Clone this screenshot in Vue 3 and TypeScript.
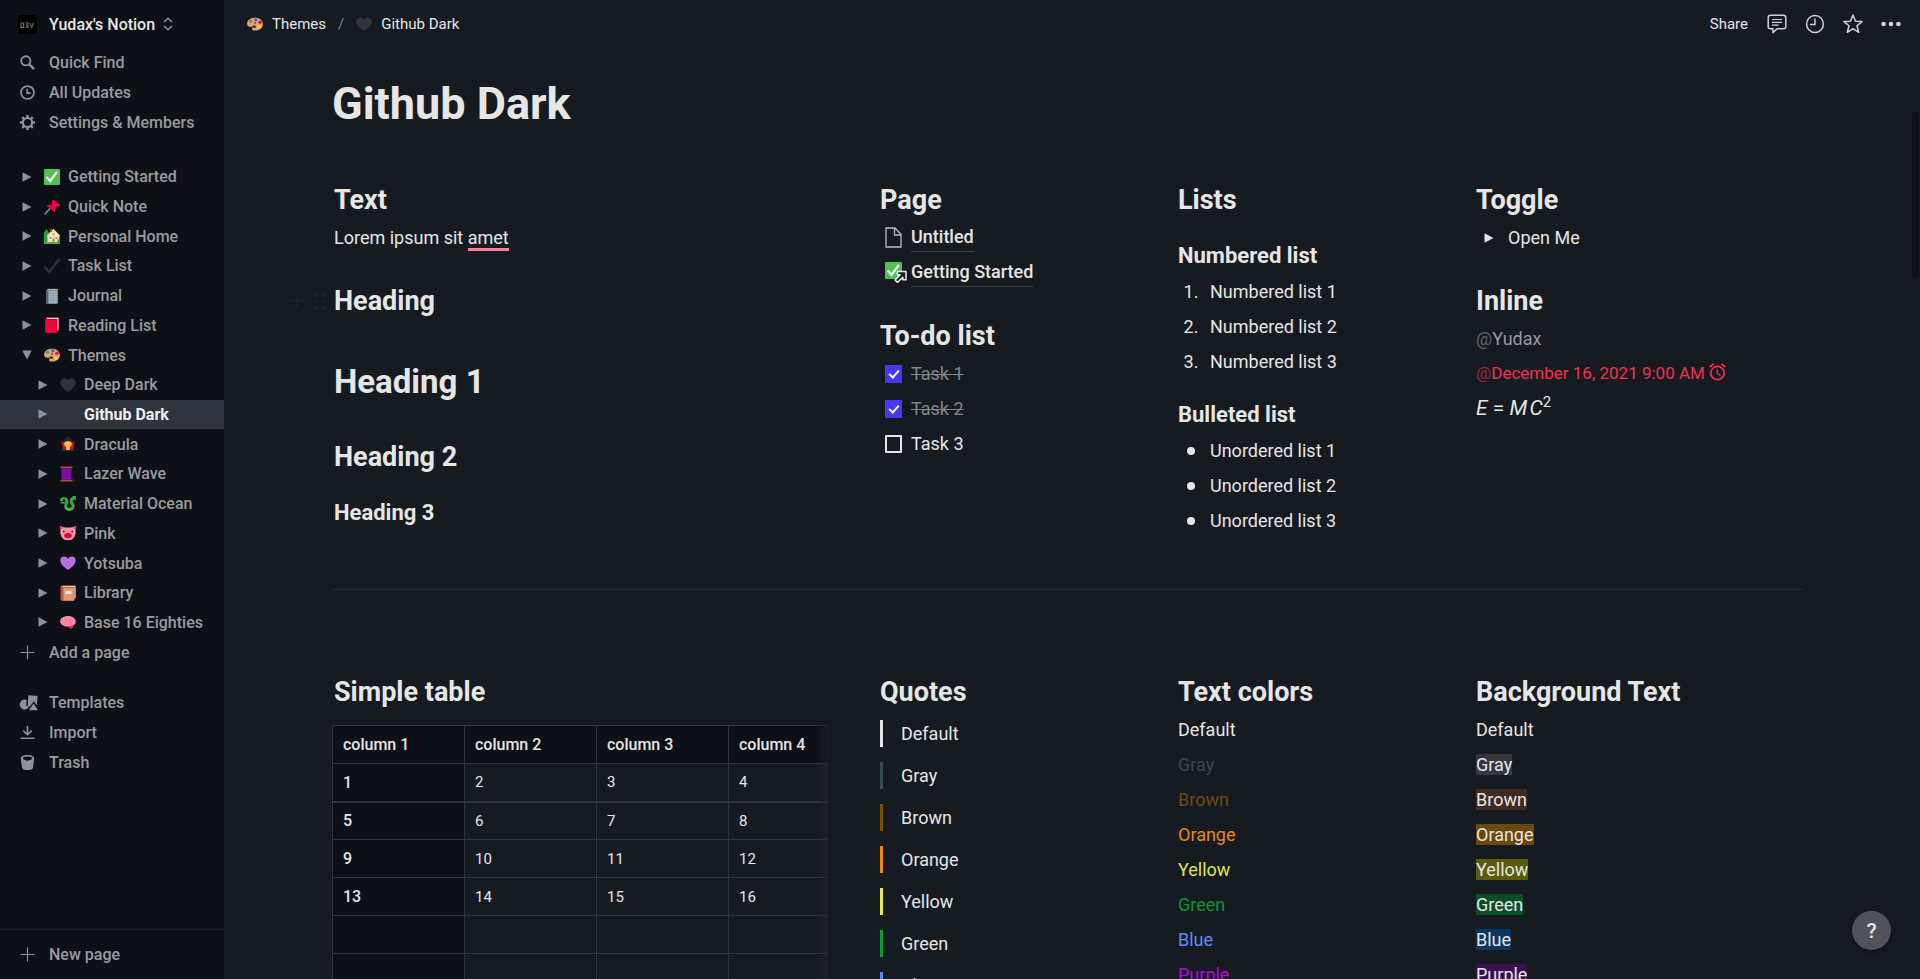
<script setup lang="ts">
import { reactive } from 'vue'

interface PageNode {
  name: string
  icon: string
  level: number
  open?: boolean
  active?: boolean
}

interface Swatch {
  name: string
  key: string
}

const pages: PageNode[] = [
  { name: 'Getting Started', icon: 'check', level: 0 },
  { name: 'Quick Note', icon: 'pin', level: 0 },
  { name: 'Personal Home', icon: 'home', level: 0 },
  { name: 'Task List', icon: 'tick', level: 0 },
  { name: 'Journal', icon: 'journal', level: 0 },
  { name: 'Reading List', icon: 'redbook', level: 0 },
  { name: 'Themes', icon: 'palette', level: 0, open: true },
  { name: 'Deep Dark', icon: 'blackheart', level: 1 },
  { name: 'Github Dark', icon: 'blackheart', level: 1, active: true },
  { name: 'Dracula', icon: 'vampire', level: 1 },
  { name: 'Lazer Wave', icon: 'thread', level: 1 },
  { name: 'Material Ocean', icon: 'dragon', level: 1 },
  { name: 'Pink', icon: 'pig', level: 1 },
  { name: 'Yotsuba', icon: 'purpleheart', level: 1 },
  { name: 'Library', icon: 'notebook', level: 1 },
  { name: 'Base 16 Eighties', icon: 'brain', level: 1 },
]

const todos = reactive([
  { text: 'Task 1', done: true },
  { text: 'Task 2', done: true },
  { text: 'Task 3', done: false },
])

const columns = ['column 1', 'column 2', 'column 3', 'column 4']
const rows: string[][] = [
  ['1', '2', '3', '4'],
  ['5', '6', '7', '8'],
  ['9', '10', '11', '12'],
  ['13', '14', '15', '16'],
  ['', '', '', ''],
  ['', '', '', ''],
]

const swatches: Swatch[] = ['Default', 'Gray', 'Brown', 'Orange', 'Yellow', 'Green', 'Blue', 'Purple'].map(
  (name) => ({ name, key: name.toLowerCase() }),
)
</script>

<template>
  <svg class="sprite" aria-hidden="true">
    <symbol id="i-check" viewBox="0 0 16 16">
      <rect width="16" height="16" rx="1" fill="#4fc14f" />
      <path d="M3 8.6 6.2 12 12.6 3.4" fill="none" stroke="#fff" stroke-width="2.2" stroke-linecap="round" />
    </symbol>
    <symbol id="i-pin" viewBox="0 0 16 16">
      <path d="M.6 15.6 6 9.2" stroke="#8b98a3" stroke-width="1.4" />
      <path d="M9 .5 15.700 5.500c.3 1.500-1 2-2.200 1.700L11.400 9.500c.3 1.800 0 3-.8 3.800L2.800 6.800c1-1.200 2.600-1.200 4-.8L8.600 3.500C7.800 2.500 8 1 9 .5z" fill="#f0063c" />
      <path d="m6.800 6.200 4.400 3" stroke="#c0002f" stroke-width=".7" />
    </symbol>
    <symbol id="i-home" viewBox="0 0 16 16">
      <path d="M0 4.500 2.500 1l3 4.500V15H0z" fill="#2f9e3c" />
      <path d="M3.500 7.500 9.500 1.500 15.500 7.500V15h-12z" fill="#f7e3ad" />
      <path d="M3.500 8 9.500 1.800 15.500 8" fill="none" stroke="#e9dcb8" stroke-width="1.400" />
      <path d="M6 .8h2v3H6z" fill="#a83b3b" />
      <path d="M5.500 9h2v2h-2zM11.500 9h2v2h-2zM8.700 5.500h1.800v1.800H8.700z" fill="#7fa9c4" />
      <path d="M8.500 10.500h2V15h-2z" fill="#c97b4a" />
      <path d="M0 14h16v2H0z" fill="#4fae3f" />
      <path d="M13.500 11.500H16V15h-2.500z" fill="#2f9e3c" />
    </symbol>
    <symbol id="i-tick" viewBox="0 0 16 16">
      <path d="M1 9.500 5.500 14 15 1.500" fill="none" stroke="#2e3238" stroke-width="2.400" stroke-linecap="round" />
    </symbol>
    <symbol id="i-journal" viewBox="0 0 16 16">
      <path d="M2 2.500 4 .8h10V14l-1.500 2H2z" fill="#56636e" />
      <path d="M4.500 3h9v12.500h-9z" fill="#a8bac8" />
      <path d="M5 5h8M5 7.500h8M5 10h8M5 12.500h8M7 3.500v12M9.500 3.500v12M12 3.500v12" stroke="#7990a2" stroke-width=".6" />
      <path d="M3.500 1.800h10" stroke="#d9e0e5" />
    </symbol>
    <symbol id="i-redbook" viewBox="0 0 16 16">
      <path d="M1 2.500C1 1 2 .5 3 .5h11.500V14L13 16H2.500C1.500 16 1 15 1 14z" fill="#c8002f" />
      <path d="M3 1.300h11v12" fill="none" stroke="#e8d5d9" stroke-width="1.200" />
      <path d="M1.800 3h10.800v12.500H3c-.8 0-1.200-.6-1.200-1.200z" fill="#f2053b" />
    </symbol>
    <symbol id="i-palette" viewBox="0 0 16 16">
      <path d="M7.500 1.800c4.800-.3 8.400 2.400 8.400 6.200 0 4.200-3.600 6.600-8 6.600-2 0-3.200-1-2.600-2.400.5-1.200-.4-1.600-1.800-1.400C1.400 11 .1 9.700.1 7.800.3 4.300 3.300 2 7.500 1.800z" fill="#e2a17c" />
      <ellipse cx="7.200" cy="10.600" rx="2" ry="1.200" fill="#3b2420" />
      <circle cx="3.600" cy="5.300" r="1.500" fill="#3f9b46" />
      <circle cx="8.800" cy="3.700" r="1.500" fill="#2f66b5" />
      <circle cx="13" cy="6.300" r="1.700" fill="#f0063c" />
      <circle cx="12" cy="11" r="1.900" fill="#fdc53a" />
      <circle cx="8" cy="7" r="1.100" fill="#8a4a34" />
    </symbol>
    <symbol id="i-blackheart" viewBox="0 0 16 16">
      <path d="M8 15C3 11.500.3 8.600.3 5.400.3 3 2 1.400 4.200 1.400c1.600 0 3 .9 3.800 2.300.8-1.400 2.200-2.300 3.800-2.300 2.200 0 3.900 1.600 3.900 4 0 3.200-2.700 6.100-7.700 9.600z" fill="#31353b" />
    </symbol>
    <symbol id="i-purpleheart" viewBox="0 0 16 16">
      <path d="M8 15C3 11.500.3 8.600.3 5.400.3 3 2 1.400 4.200 1.400c1.600 0 3 .9 3.800 2.300.8-1.400 2.200-2.300 3.800-2.300 2.200 0 3.900 1.600 3.900 4 0 3.200-2.700 6.100-7.700 9.600z" fill="#b571db" />
    </symbol>
    <symbol id="i-vampire" viewBox="0 0 16 16">
      <path d="M4 5c0-2.500 1.500-4 4-4s4 1.500 4 4v2H4z" fill="#23272b" />
      <path d="M1.500 5.500 5 7l3 6 3-6 3.500-1.500L13 13H3z" fill="#e8063a" />
      <path d="M2 13h12l.5 2h-13z" fill="#2c3137" />
      <path d="M4.500 6.500C5.500 5 7 5.800 8 5c1 .8 2.500 0 3.500 1.500.8 1.200.5 2.500-.5 3L9.800 11.500V14H6.200v-2.500L5 9.500c-1-.5-1.300-1.800-.5-3z" fill="#fbc53c" />
    </symbol>
    <symbol id="i-thread" viewBox="0 0 16 16">
      <path d="M1.500 2.500h10v11h-10z" fill="#7d10a8" />
      <path d="M1.500 5h10M1.500 7.500h10M1.500 10h10" stroke="#6d0a98" stroke-width=".7" />
      <path d="M11.500 12.500c2 0 2 2.300 4.300 2.300" fill="none" stroke="#5f0a86" />
      <path d="M.5.500h12v1.800H.5zM.5 13.700h12v1.800H.5z" fill="#a8503c" />
    </symbol>
    <symbol id="i-dragon" viewBox="0 0 16 16">
      <path d="M1.500 3.800C3 1.800 6.200 2 6.800 4.500 7.300 7 5.200 9 5.800 11.200c.7 2.800 5.800 2.800 7 .2 1.200-2.800-1.600-4-1.600-6.200 0-1.700 1-2.500 2.300-2.900" fill="none" stroke="#3aa845" stroke-width="3" stroke-linecap="round" />
      <path d="M.5 6.800h4.800M12.500.5 15.500 1l-.5 3" fill="none" stroke="#3aa845" stroke-width="1.500" />
      <path d="M6 12.500c1.500 1.800 5 2 6.800.3" fill="none" stroke="#74d06e" stroke-width=".9" />
      <circle cx="4" cy="3.600" r=".8" fill="#12301a" />
    </symbol>
    <symbol id="i-pig" viewBox="0 0 16 16">
      <path d="M.3 1.300 5 2.500h6l4.700-1.200-.2 4.200c.8 5-2 9.700-7.500 9.700S-.3 10.500.5 5.500z" fill="#ff8fab" />
      <path d="m.5 1.300 3.500 1L1.200 4.500zM15.500 1.300l-3.500 1 2.800 2.200z" fill="#e45f80" />
      <ellipse cx="8" cy="10.600" rx="3.800" ry="2.700" fill="#e8063f" />
      <circle cx="6.600" cy="10.600" r=".8" fill="#8e0022" />
      <circle cx="9.400" cy="10.600" r=".8" fill="#8e0022" />
      <circle cx="3.800" cy="6.500" r=".9" fill="#2c3137" />
      <circle cx="12.200" cy="6.500" r=".9" fill="#2c3137" />
    </symbol>
    <symbol id="i-notebook" viewBox="0 0 16 16">
      <path d="M.5 2.500C.5 1.300 1.300.5 2.500.5h13V14L14 16H2.500C1.300 16 .5 15.200.5 14z" fill="#b8553c" />
      <path d="M2.500 1.400H15V13" fill="none" stroke="#e8dcd8" stroke-width="1" />
      <path d="M3.400 2.800h10.400v12.700H3.400z" fill="#e09a78" />
      <path d="M5.500 6h6v3h-6z" fill="#f3e7df" />
    </symbol>
    <symbol id="i-brain" viewBox="0 0 16 16">
      <path d="M8 2c4.500 0 7.800 2.300 7.800 5.600 0 2-1.200 3.600-3 4.200.2 1.500-.6 2.600-1.800 2.700-1.400 0-2-.9-3-2-3 .6-4.500-.6-5.600-1.500C.9 10.300.2 9 .2 7.500.2 4.300 3.500 2 8 2z" fill="#ff86a4" />
      <path d="M12.800 11.800c.2 1.500-.6 2.600-1.800 2.700-1.400 0-2-.9-3-2z" fill="#f0184f" />
      <path d="M4 5.500c1 1 2 1 3 0M9 5c1 1.500 2.500 1 3.500.5M4 9c1.500-1 2.500 0 4-.5 1.500-.8 3-.5 4 .5" fill="none" stroke="#f57a98" stroke-width=".7" />
    </symbol>
    <symbol id="i-plus" viewBox="0 0 16 16">
      <path d="M8 .5v15M.5 8h15" fill="none" stroke="currentColor" stroke-width="1.200" />
    </symbol>
  </svg>

  <div class="app">
    <aside class="sidebar">
      <button class="workspace" type="button">
        <svg class="avatar" viewBox="0 0 19 19" aria-hidden="true">
          <rect width="19" height="19" rx="3" fill="#000" />
          <path d="M3 8h2.600v4.400H3zM7.500 8H10v4.400H7.500M8 10.200h2M12 8l1.800 4.400L15.600 8" fill="none" stroke="#6d6d6d" stroke-width="1.100" />
        </svg>
        <span>Yudax's Notion</span>
        <svg class="updown" viewBox="0 0 10 14" aria-hidden="true">
          <path d="M1 5 5 1.200 9 5M1 9l4 3.800L9 9" fill="none" stroke="currentColor" stroke-width="1.500" />
        </svg>
      </button>

      <nav class="menu top-menu" aria-label="Workspace">
        <a class="item" href="#">
          <svg class="menu-icon" viewBox="0 0 16 16" aria-hidden="true">
            <circle cx="6.200" cy="6.200" r="4.900" fill="none" stroke="currentColor" stroke-width="2" />
            <path d="m10 10 5 5" stroke="currentColor" stroke-width="2.500" />
          </svg>
          Quick Find
        </a>
        <a class="item" href="#">
          <svg class="menu-icon" viewBox="0 0 16 16" aria-hidden="true">
            <circle cx="8" cy="8" r="6.900" fill="none" stroke="currentColor" stroke-width="1.900" />
            <path d="M7.600 4v4.600h3.800" fill="none" stroke="currentColor" stroke-width="1.800" />
          </svg>
          All Updates
        </a>
        <a class="item" href="#">
          <svg class="menu-icon" viewBox="0 0 16 16" aria-hidden="true">
            <circle cx="8" cy="8" r="4.900" fill="none" stroke="currentColor" stroke-width="2.200" />
            <path
              d="M8 0v3M8 13v3M0 8h3M13 8h3M2.340 2.340l2.100 2.100M11.560 11.560l2.100 2.100M13.660 2.340l-2.100 2.100M4.440 11.560l-2.100 2.100"
              fill="none"
              stroke="currentColor"
              stroke-width="2.600"
            />
          </svg>
          Settings &amp; Members
        </a>
      </nav>

      <nav class="menu tree" aria-label="Pages">
        <a
          v-for="page in pages"
          :key="page.name"
          class="item page"
          :class="{ child: page.level === 1, active: page.active }"
          href="#"
        >
          <svg class="arrow" :class="{ open: page.open }" viewBox="0 0 10 10" aria-hidden="true">
            <path d="M.5.300 9.500 5 .5 9.700z" fill="currentColor" />
          </svg>
          <svg class="emoji" aria-hidden="true"><use :href="'#i-' + page.icon" /></svg>
          {{ page.name }}
        </a>
        <button class="item" type="button">
          <svg class="menu-icon" aria-hidden="true"><use href="#i-plus" /></svg>
          Add a page
        </button>
      </nav>

      <nav class="menu tools" aria-label="Tools">
        <a class="item" href="#">
          <svg class="menu-icon wide" viewBox="0 0 19 17" aria-hidden="true">
            <path d="M9.300 1.200 18.600 2l-.7 9.400-3-4.200-4 5.400-2.200-.300z" fill="currentColor" />
            <path d="M7.600 5.800a5 5 0 1 0 .8 8.900L10 12.500 7.300 12z" fill="currentColor" />
            <path d="M14.500 9.500 19 16.300h-9z" fill="currentColor" />
          </svg>
          Templates
        </a>
        <a class="item" href="#">
          <svg class="menu-icon" viewBox="0 0 16 16" aria-hidden="true">
            <path d="M8 1v9.500M3.500 6 8 10.400 12.500 6M.5 14.200h15" fill="none" stroke="currentColor" stroke-width="1.700" />
          </svg>
          Import
        </a>
        <a class="item" href="#">
          <svg class="menu-icon" viewBox="0 0 16 16" aria-hidden="true">
            <path
              d="M8 0c4 0 7.200 1.500 7.200 3.400L13.800 13.500C13.600 15 11.500 16 8 16s-5.600-1-5.800-2.500L.8 3.400C.8 1.500 4 0 8 0zm0 1.700c-2.800 0-5 .9-5 1.900 0 .5.500 1 1.300 1.300C5.300 5.600 6.600 6.200 8 6.200s2.700-.6 3.700-1.300c.8-.3 1.300-.8 1.300-1.300 0-1-2.200-1.900-5-1.900z"
              fill="currentColor"
              fill-rule="evenodd"
            />
          </svg>
          Trash
        </a>
      </nav>

      <button class="item new-page" type="button">
        <svg class="menu-icon" aria-hidden="true"><use href="#i-plus" /></svg>
        New page
      </button>
    </aside>

    <main class="main">
      <header class="topbar">
        <nav class="crumbs" aria-label="Breadcrumb">
          <a href="#"><svg class="crumb-icon" aria-hidden="true"><use href="#i-palette" /></svg>Themes</a>
          <span class="slash">/</span>
          <a href="#"><svg class="crumb-icon" aria-hidden="true"><use href="#i-blackheart" /></svg>Github Dark</a>
        </nav>
        <div class="actions">
          <button class="share" type="button">Share</button>
          <button type="button" aria-label="Comments">
            <svg viewBox="0 0 20 20">
              <path
                d="M3.500 1.200h13c1.500 0 2.300.8 2.300 2.300v9c0 1.500-.8 2.300-2.300 2.300H10l-4 3.900v-3.900H3.500c-1.500 0-2.300-.8-2.300-2.300v-9c0-1.500.8-2.300 2.300-2.300z"
                fill="none"
                stroke="currentColor"
                stroke-width="1.500"
                stroke-linejoin="round"
              />
              <path d="M5 5.500h10M5 8.300h10M5 11.100h6.500" stroke="currentColor" stroke-width="1.200" />
            </svg>
          </button>
          <button type="button" aria-label="Updates">
            <svg viewBox="0 0 20 20">
              <circle cx="10" cy="10" r="8.400" fill="none" stroke="currentColor" stroke-width="1.500" />
              <path d="M10 4.500v6H5" fill="none" stroke="currentColor" stroke-width="1.500" />
            </svg>
          </button>
          <button type="button" aria-label="Favorite">
            <svg viewBox="0 0 20 20">
              <path
                d="m10 1 2.500 6.200 6.500.4-5 4.200 1.700 6.500L10 14.700l-5.700 3.600L6 11.800 1 7.600l6.500-.4z"
                fill="none"
                stroke="currentColor"
                stroke-width="1.500"
                stroke-linejoin="round"
              />
            </svg>
          </button>
          <button type="button" aria-label="More">
            <svg viewBox="0 0 20 20" fill="currentColor">
              <circle cx="2.600" cy="10" r="2.300" />
              <circle cx="10" cy="10" r="2.300" />
              <circle cx="17.400" cy="10" r="2.300" />
            </svg>
          </button>
        </div>
      </header>

      <article class="content">
        <h1 class="title">Github Dark</h1>

        <div class="grid">
          <section>
            <h2>Text</h2>
            <p class="line">Lorem ipsum sit <span class="amet">amet</span></p>
            <div class="with-handle">
              <h2>Heading</h2>
              <div class="handle" aria-hidden="true">
                <svg class="handle-plus"><use href="#i-plus" /></svg>
                <svg class="handle-dots" viewBox="0 0 10 16" fill="currentColor">
                  <circle cx="1.700" cy="1.700" r="1.600" /><circle cx="8.300" cy="1.700" r="1.600" />
                  <circle cx="1.700" cy="8" r="1.600" /><circle cx="8.300" cy="8" r="1.600" />
                  <circle cx="1.700" cy="14.300" r="1.600" /><circle cx="8.300" cy="14.300" r="1.600" />
                </svg>
              </div>
            </div>
            <h2 class="big">Heading 1</h2>
            <h2 class="spaced">Heading 2</h2>
            <h3>Heading 3</h3>
          </section>

          <section>
            <h2>Page</h2>
            <a class="line page-link" href="#">
              <svg class="doc" viewBox="0 0 17 21" aria-hidden="true">
                <path d="M1 1h9l6 6.500V20H1zM9.500 1v7H16" fill="none" stroke="currentColor" stroke-width="1.300" />
              </svg>
              <span>Untitled</span>
            </a>
            <a class="line page-link" href="#">
              <svg class="linked" viewBox="0 0 22 21" aria-hidden="true">
                <use href="#i-check" width="17" height="17" />
                <path
                  d="M12.500 9.600h8.500v8.200h-3.200v-2.600l-5.300 5.200-2.400-2.400 5.100-5.200h-2.700z"
                  fill="#161b22"
                  stroke="#eee"
                  stroke-width="1.500"
                  stroke-linejoin="round"
                />
              </svg>
              <span>Getting Started</span>
            </a>
            <h2>To-do list</h2>
            <label v-for="todo in todos" :key="todo.text" class="line todo" :class="{ done: todo.done }">
              <input v-model="todo.done" type="checkbox" />
              <span>{{ todo.text }}</span>
            </label>
          </section>

          <section>
            <h2>Lists</h2>
            <h3>Numbered list</h3>
            <ol>
              <li v-for="n in 3" :key="n" class="line"><span class="marker">{{ n }}.</span>Numbered list {{ n }}</li>
            </ol>
            <h3>Bulleted list</h3>
            <ul>
              <li v-for="n in 3" :key="n" class="line">
                <span class="marker"><i class="dot"></i></span>Unordered list {{ n }}
              </li>
            </ul>
          </section>

          <section>
            <h2>Toggle</h2>
            <button class="line toggle" type="button">
              <span class="marker">
                <svg viewBox="0 0 10 10" aria-hidden="true"><path d="M.5.300 9.500 5 .5 9.700z" fill="currentColor" /></svg>
              </span>
              Open Me
            </button>
            <h2>Inline</h2>
            <p class="line mention"><span class="at">@</span>Yudax</p>
            <p class="line date">
              <span class="at">@</span>December 16, 2021 9:00 AM
              <svg viewBox="0 0 17 18" aria-hidden="true">
                <circle cx="8.500" cy="10" r="6.700" fill="none" stroke="currentColor" stroke-width="1.700" />
                <path d="M.8 4 4.500 1M16.200 4l-3.700-3" stroke="currentColor" stroke-width="1.700" />
                <path d="M8.300 6.300v4.200l3.200 2" fill="none" stroke="currentColor" stroke-width="1.400" />
              </svg>
            </p>
            <p class="line math"><i>E</i> = <i>M&#8202;C</i><sup>2</sup></p>
          </section>
        </div>

        <hr />

        <div class="grid">
          <section>
            <h2>Simple table</h2>
            <div class="table-wrap">
              <table>
                <thead>
                  <tr>
                    <th v-for="column in columns" :key="column" scope="col">{{ column }}</th>
                  </tr>
                </thead>
                <tbody>
                  <tr v-for="(row, r) in rows" :key="r">
                    <th scope="row">{{ row[0] }}</th>
                    <td v-for="(cell, c) in row.slice(1)" :key="c">{{ cell }}</td>
                  </tr>
                </tbody>
              </table>
            </div>
          </section>

          <section>
            <h2>Quotes</h2>
            <div class="quotes">
              <blockquote v-for="s in swatches" :key="s.key" :class="'bar-' + s.key">{{ s.name }}</blockquote>
            </div>
          </section>

          <section>
            <h2>Text colors</h2>
            <p v-for="s in swatches" :key="s.key" class="line" :class="'text-' + s.key">{{ s.name }}</p>
          </section>

          <section>
            <h2>Background Text</h2>
            <p v-for="s in swatches" :key="s.key" class="line"><span :class="'bg-' + s.key">{{ s.name }}</span></p>
          </section>
        </div>
      </article>

      <div class="scroll-thumb"></div>
      <button class="help" type="button" aria-label="Help">?</button>
    </main>
  </div>
</template>

<style>
body {
  background: #161b22;
}
</style>

<style scoped>
.sprite {
  position: absolute;
  width: 0;
  height: 0;
}
.app {
  display: flex;
  height: 100vh;
  overflow: hidden;
  background: #161b22;
  color: #e6e6e6;
  font-family: Roboto, 'Noto Sans', sans-serif;
  font-size: 18px;
}
svg {
  display: block;
  flex: none;
}
button {
  padding: 0;
  border: 0;
  background: none;
  color: inherit;
  font: inherit;
  text-align: left;
  cursor: pointer;
}
a {
  color: inherit;
  text-decoration: none;
}
h1,
h2,
h3,
p,
ul,
ol,
blockquote {
  margin: 0;
  padding: 0;
  list-style: none;
}

/* Sidebar */
.sidebar {
  display: flex;
  flex: none;
  flex-direction: column;
  width: 224px;
  background: #0d1017;
  color: #9b9b9d;
  font-size: 16px;
  font-weight: 500;
}
.workspace {
  display: flex;
  align-items: center;
  height: 48px;
  padding-left: 18px;
  color: #e6e6e6;
  font-weight: 500;
}
.avatar {
  width: 19px;
  height: 19px;
  margin-right: 12px;
}
.updown {
  width: 10px;
  height: 14px;
  margin-left: 8px;
  color: #8b949e;
}
.menu {
  display: grid;
  grid-auto-rows: 1fr;
}
.top-menu,
.tools {
  min-height: 89px;
}
.tree {
  min-height: 505px;
  margin: 25px 0 21px;
}
.item {
  display: flex;
  align-items: center;
  padding-left: 20px;
}
.menu-icon {
  width: 15px;
  height: 15px;
  margin-right: 14px;
  color: #8b949e;
}
.menu-icon.wide {
  width: 19px;
  height: 17px;
  margin: 0 11px 0 -1px;
}
.page.child {
  padding-left: 36px;
}
.page.active {
  background: #30343d;
  color: #f0f0f0;
  font-weight: 700;
}
.arrow {
  width: 10px;
  height: 10px;
  margin: 0 12px 0 2px;
  color: #8b949e;
}
.arrow.open {
  transform: rotate(90deg);
}
.emoji {
  width: 16px;
  height: 16px;
  margin-right: 8px;
}
.new-page {
  height: 50px;
  margin-top: auto;
  border-top: 1px solid #1d2129;
}

/* Top bar */
.main {
  position: relative;
  flex: 1;
  min-width: 0;
}
.topbar {
  display: flex;
  align-items: center;
  justify-content: space-between;
  height: 48px;
  padding: 0 19px 0 23px;
  font-size: 15px;
}
.crumbs,
.crumbs a {
  display: flex;
  align-items: center;
}
.crumb-icon {
  width: 16px;
  height: 16px;
  margin-right: 9px;
}
.slash {
  margin: 0 12px;
  color: #7d8288;
}
.actions {
  display: flex;
  align-items: center;
  gap: 18px;
  color: #d0d2d4;
}
.actions svg {
  width: 20px;
  height: 20px;
}
.share {
  margin-right: 1px;
  color: #e6e6e6;
}

/* Page body */
.content {
  padding: 24px 117px 0 108px;
}
.title {
  margin-bottom: 46px;
  font-size: 45px;
  line-height: 64px;
}
.grid {
  display: grid;
  grid-template-columns: 496fr 248fr 248fr 329fr;
  gap: 50px;
}
section {
  display: flex;
  flex-direction: column;
  min-width: 0;
  padding-left: 2px;
}
h2 {
  margin-bottom: 2px;
  font-size: 27px;
  line-height: 36px;
}
h2:not(:first-child) {
  margin-top: 28px;
}
h2.big:not(:first-child) {
  margin-top: 39px;
  font-size: 33px;
  line-height: 44px;
}
h2.spaced:not(:first-child) {
  margin-top: 33px;
}
h3 {
  margin: 22px 0 4px;
  font-size: 22px;
  line-height: 28px;
}
.line {
  line-height: 35px;
}
.amet {
  border-bottom: 3px solid #ff7b9c;
}
.with-handle {
  position: relative;
  margin-top: 28px;
}
.handle {
  position: absolute;
  top: 10px;
  left: -45px;
  display: flex;
  gap: 10px;
  color: #20252d;
}
.handle-plus {
  width: 16px;
  height: 16px;
}
.handle-dots {
  width: 10px;
  height: 16px;
}
.page-link {
  display: flex;
  align-items: center;
  height: 35px;
  padding-left: 5px;
  font-weight: 500;
}
.page-link span {
  border-bottom: 1px solid #3c4148;
  line-height: 28px;
}
.doc {
  width: 17px;
  height: 21px;
  margin-right: 9px;
  color: #b9bbbe;
}
.linked {
  width: 22px;
  height: 21px;
  margin-right: 4px;
}
.todo {
  display: flex;
  align-items: center;
}
.todo input {
  position: relative;
  width: 17px;
  height: 18px;
  margin: 0 9px 0 5px;
  border: 2px solid #e6e6e6;
  appearance: none;
}
.todo input:checked {
  border-color: #4c36f0;
  background: #4c36f0;
}
.todo input:checked::after {
  position: absolute;
  top: 1px;
  left: 4px;
  width: 4px;
  height: 8px;
  border: solid #fff;
  border-width: 0 2px 2px 0;
  content: '';
  transform: rotate(42deg);
}
.done span {
  color: #838689;
  text-decoration: line-through;
  text-decoration-thickness: 1px;
}
li,
.toggle {
  display: flex;
  align-items: center;
}
.marker {
  display: flex;
  justify-content: center;
  width: 26px;
  margin-right: 6px;
}
.dot {
  width: 8px;
  height: 8px;
  border-radius: 50%;
  background: #e6e6e6;
}
.toggle svg {
  width: 10px;
  height: 10px;
}
.mention {
  color: #97999c;
}
.at {
  opacity: 0.6;
}
.date {
  color: #f52f4e;
  font-size: 17px;
}
.date svg {
  display: inline-block;
  width: 17px;
  height: 18px;
  vertical-align: -2px;
}
.math {
  font-size: 21px;
}
.math sup {
  font-size: 15px;
  line-height: 0;
}
hr {
  margin: 51px 0 84px;
  border: 0;
  border-top: 1px solid #262b33;
}

/* Simple table */
.table-wrap {
  position: relative;
  margin: 13px 0 0 -2px;
  overflow: hidden;
}
.table-wrap::after {
  position: absolute;
  top: 0;
  right: 0;
  bottom: 0;
  width: 12px;
  background: linear-gradient(90deg, #20242a00, #20242ab3);
  content: '';
}
table {
  width: 529px;
  border-collapse: collapse;
  table-layout: fixed;
  font-size: 15px;
}
th,
td {
  height: 38px;
  padding: 0 10px;
  border: 1px solid #30343c;
  box-sizing: border-box;
  text-align: left;
}
tbody tr:first-child > * {
  border-bottom-width: 2px;
}
th {
  background: #0d1017;
  font-size: 16px;
  font-weight: 500;
}

/* Quotes and colours */
.quotes {
  display: flex;
  flex-direction: column;
  gap: 15px;
  margin-top: 8px;
}
blockquote {
  padding-left: 18px;
  border-left: 3px solid;
  line-height: 27px;
}
blockquote[class] {
  color: #e6e6e6;
}
.bar-default { border-color: #e6e6e6; }
.bar-gray { border-color: #354c53; }
.bar-brown { border-color: #7a5000; }
.bar-orange { border-color: #f28b00; }
.bar-yellow { border-color: #e8ea45; }
.bar-green { border-color: #069d35; }
.bar-blue { border-color: #5b86f5; }
.bar-purple { border-color: #b60be0; }
.text-gray { color: #344a53; }
.text-brown { color: #6f4a0c; }
.text-orange { color: #e58a05; }
.text-yellow { color: #dfe552; }
.text-green { color: #079636; }
.text-blue { color: #5f8cf0; }
.text-purple { color: #b10bdc; }
.bg-gray { background: #34373f; }
.bg-brown { background: #412b20; }
.bg-orange { background: #6a480e; }
.bg-yellow { background: #595c0a; }
.bg-green { background: #0b4d27; }
.bg-blue { background: #0b3763; }
.bg-purple { background: #38104f; }

.scroll-thumb {
  position: absolute;
  top: 112px;
  right: 1px;
  width: 7px;
  height: 166px;
  border-radius: 2px;
  background: #0d1117;
}
.help {
  position: absolute;
  right: 29px;
  bottom: 29px;
  width: 39px;
  height: 39px;
  border-radius: 50%;
  background: #50545a;
  box-shadow: 0 2px 4px #0006;
  font-size: 21px;
  font-weight: 500;
  text-align: center;
}
</style>
